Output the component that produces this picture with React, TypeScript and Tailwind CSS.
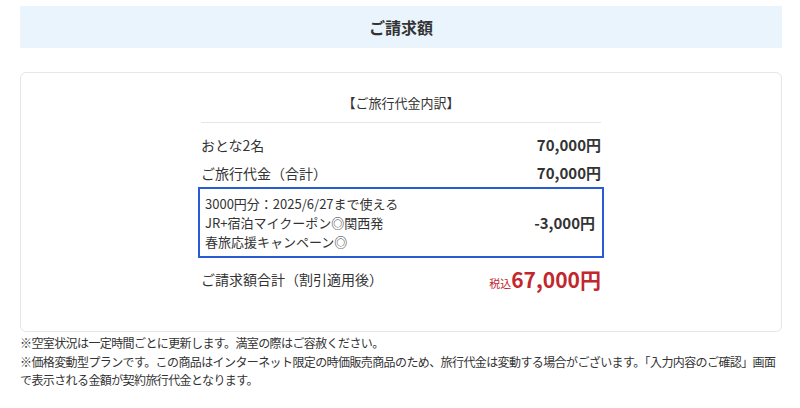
import React from "react";

const font = { fontFamily: '"Noto Sans CJK JP", "Noto Sans", sans-serif' };

function Row({ label, price }: { label: string; price: string }) {
	return (
		<div className="flex h-[28px] items-center justify-between text-[14px] leading-[20px] text-[#333]">
			<span>{label}</span>
			<span className="font-bold text-[15px]">{price}</span>
		</div>
	);
}

export default function App() {
	return (
		<div className="w-[800px] h-[408px] bg-white pl-5 pr-[18px]" style={font}>
			<div className="mt-[6px] flex h-[42px] items-center justify-center bg-[#e9f4fd]">
				<h2 className="text-[16px] font-bold text-[#333]">ご請求額</h2>
			</div>

			<div className="mt-[24px] rounded-md border border-[#e6e6e6] pt-[20px] pb-[37px]">
				<div className="mx-auto w-[400px]">
					<div className="border-b border-[#e6e6e6] pb-[9px] text-center text-[13px] leading-[20px] text-[#333]">【ご旅行代金内訳】</div>
					<div className="mt-[8px]">
						<Row label="おとな2名" price="70,000円" />
						<Row label="ご旅行代金（合計）" price="70,000円" />
					</div>
					<div className="-mx-[3px] flex items-center justify-between border-2 border-[#2a5bd7] py-[5px] pl-[5px] pr-[7px] text-[13px] leading-[19px] text-[#333]">
						<div>
							<div>3000円分：2025/6/27まで使える</div>
							<div>JR+宿泊マイクーポン◎関西発</div>
							<div>春旅応援キャンペーン◎</div>
						</div>
						<span className="text-[15px] font-bold">-3,000円</span>
					</div>
					<div className="mt-[6px] flex h-[30px] items-center justify-between text-[14px] leading-[20px] text-[#333]">
						<span>ご請求額合計（割引適用後）</span>
						<span className="flex items-baseline text-[#c1272d]">
							<span className="text-[11px]">税込</span>
							<span className="text-[21px] font-bold leading-[30px]">67,000円</span>
						</span>
					</div>
				</div>
			</div>

			<div className="mt-[2px] text-[12px] leading-[18.5px] tracking-[-0.6px] text-[#333]">
				<p>※空室状況は一定時間ごとに更新します。満室の際はご容赦ください。</p>
				<p>
					※価格変動型プランです。この商品はインターネット限定の時価販売商品のため、旅行代金は変動する場合がございます。「入力内容のご確認」画面
					<br />
					で表示される金額が契約旅行代金となります。
				</p>
			</div>
		</div>
	);
}
